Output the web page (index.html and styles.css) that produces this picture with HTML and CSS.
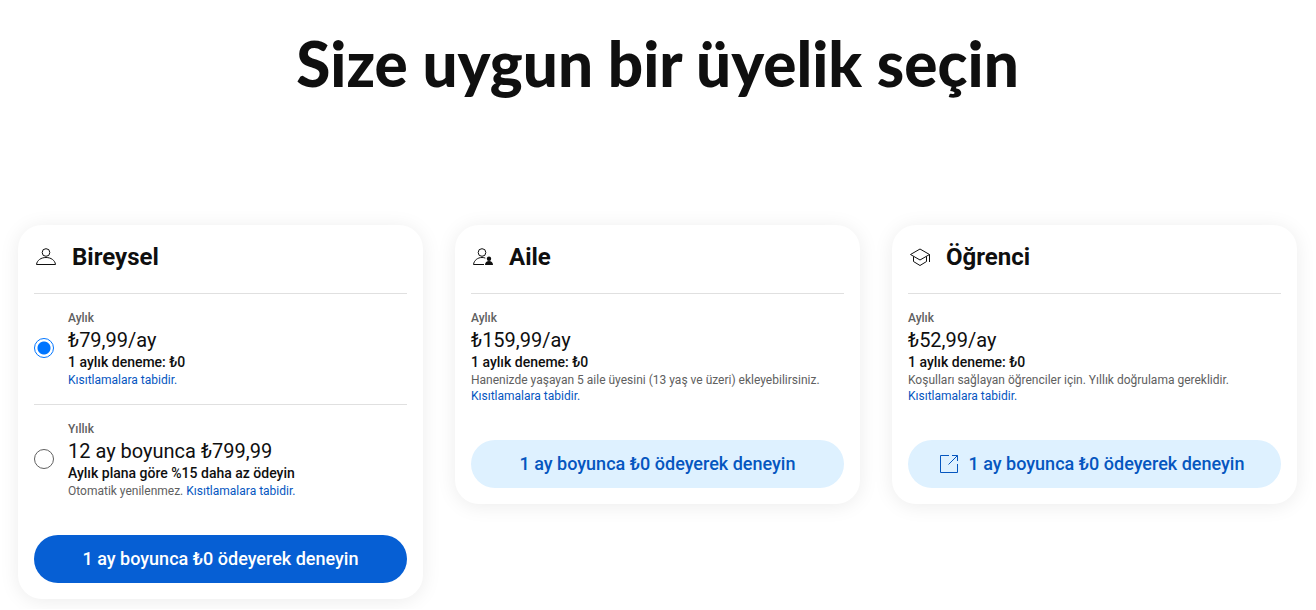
FILE: index.html
```html
<!DOCTYPE html>
<html lang="tr">
<head>
    <meta charset="utf-8">
    <meta name="viewport" content="width=device-width, initial-scale=1">
    <title>Size uygun bir üyelik seçin</title>
    <link rel="stylesheet" href="styles.css">
</head>
<body>
    <main class="plans">
        <h1 class="plans__title">Size uygun bir üyelik seçin</h1>

        <div class="plans__list">
            <section class="card">
                <header class="card__header">
                    <svg class="icon" viewBox="0 0 24 24" aria-hidden="true">
                        <circle cx="12" cy="7.5" r="3.8"/>
                        <path d="M2.500 19.500C3 15.300 7 12.500 12 12.500s9 2.800 9.500 7z"/>
                    </svg>
                    <h2 class="card__title">Bireysel</h2>
                </header>
                <div class="plan">
                    <input class="plan__radio" type="radio" name="plan" id="monthly" checked>
                    <div class="plan__text">
                        <label for="monthly">
                            <span class="plan__period">Aylık</span>
                            <span class="plan__price">₺79,99/ay</span>
                            <span class="plan__offer">1 aylık deneme: ₺0</span>
                        </label>
                        <p class="plan__note"><a href="#">Kısıtlamalara tabidir.</a></p>
                    </div>
                </div>
                <div class="plan">
                    <input class="plan__radio" type="radio" name="plan" id="yearly">
                    <div class="plan__text">
                        <label for="yearly">
                            <span class="plan__period">Yıllık</span>
                            <span class="plan__price">12 ay boyunca ₺799,99</span>
                            <span class="plan__offer">Aylık plana göre %15 daha az ödeyin</span>
                        </label>
                        <p class="plan__note">Otomatik yenilenmez. <a href="#">Kısıtlamalara tabidir.</a></p>
                    </div>
                </div>
                <button class="btn btn--primary" type="button">1 ay boyunca ₺0 ödeyerek deneyin</button>
            </section>

            <section class="card">
                <header class="card__header">
                    <svg class="icon" viewBox="0 0 24 24" aria-hidden="true">
                        <circle cx="11" cy="7.5" r="3.8"/>
                        <path d="M13 19.500H2.500C3 15.500 6.500 12.500 11 12.500c1.300 0 2.400.2 3.300.6"/>
                        <circle class="icon__fill" cx="18" cy="13.800" r="2.200"/>
                        <path class="icon__fill" d="M14 20c0-2.500 1.800-4 4-4s4 1.500 4 4z"/>
                    </svg>
                    <h2 class="card__title">Aile</h2>
                </header>
                <div class="plan">
                    <div class="plan__text">
                        <span class="plan__period">Aylık</span>
                        <span class="plan__price">₺159,99/ay</span>
                        <span class="plan__offer">1 aylık deneme: ₺0</span>
                        <p class="plan__note">Hanenizde yaşayan 5 aile üyesini (13 yaş ve üzeri) ekleyebilirsiniz. <a href="#">Kısıtlamalara tabidir.</a></p>
                    </div>
                </div>
                <button class="btn" type="button">1 ay boyunca ₺0 ödeyerek deneyin</button>
            </section>

            <section class="card">
                <header class="card__header">
                    <svg class="icon" viewBox="0 0 24 24" aria-hidden="true">
                        <path d="M2.500 9.500 12 4l9.500 5.500L12 15z"/>
                        <path d="M5.500 11.500v5L12 20.500l6.500-4v-5M21.500 9.500V17"/>
                    </svg>
                    <h2 class="card__title">Öğrenci</h2>
                </header>
                <div class="plan">
                    <div class="plan__text">
                        <span class="plan__period">Aylık</span>
                        <span class="plan__price">₺52,99/ay</span>
                        <span class="plan__offer">1 aylık deneme: ₺0</span>
                        <p class="plan__note">Koşulları sağlayan öğrenciler için. Yıllık doğrulama gereklidir. <a href="#">Kısıtlamalara tabidir.</a></p>
                    </div>
                </div>
                <button class="btn btn--icon" type="button">
                    <svg class="icon" viewBox="0 0 24 24" aria-hidden="true">
                        <path d="M12 3.500H3.500v17h17V12M15 3.500h5.500V9M20.500 3.500l-9 9"/>
                    </svg>
                    1 ay boyunca ₺0 ödeyerek deneyin
                </button>
            </section>
        </div>
    </main>
</body>
</html>
```
FILE: styles.css
```css
* {
    box-sizing: border-box;
}

body {
    background: #fff;
    color: #0f0f0f;
    font-family: Roboto, Arial, sans-serif;
    margin: 0;
}

a {
    color: #0556bf;
    text-decoration: none;
}

.plans {
    padding: 27px 19px 10px 18px;
}

.plans__title {
    font-family: Lato, sans-serif;
    font-size: 62px;
    font-weight: 900;
    line-height: 72px;
    margin: 0 0 126px;
    text-align: center;
}

.plans__list {
    align-items: start;
    display: grid;
    gap: 32px;
    grid-template-columns: repeat(3, 1fr);
}

.card {
    border-radius: 24px;
    box-shadow: 0 2px 20px rgba(0, 0, 0, 0.08);
    padding: 16px;
}

.card__header {
    align-items: center;
    display: flex;
    gap: 14px;
    padding-bottom: 20px;
}

.card__title {
    font-size: 24px;
    font-weight: 700;
    line-height: 32px;
    margin: 0;
}

.icon {
    fill: none;
    flex-shrink: 0;
    height: 24px;
    stroke: currentColor;
    width: 24px;
}

.icon__fill {
    fill: currentColor;
    stroke: none;
}

.plan {
    align-items: center;
    border-top: 1px solid #e0e0e0;
    display: flex;
    gap: 14px;
    padding: 16px 0;
}

.plan__radio {
    appearance: none;
    border: 1px solid #606060;
    border-radius: 50%;
    flex-shrink: 0;
    height: 20px;
    margin: 0 0 2px;
    width: 20px;
}

.plan__radio:checked {
    background: radial-gradient(circle, #0075ff 6px, #fff 7px);
    border-color: #0075ff;
}

.plan__period,
.plan__price,
.plan__offer {
    display: block;
}

.plan__period {
    color: #606060;
    font-size: 12px;
    font-weight: 500;
    line-height: 16px;
}

.plan__price {
    font-size: 20px;
    line-height: 28px;
}

.plan__offer {
    font-size: 14px;
    font-weight: 500;
    line-height: 16px;
    margin-bottom: 2px;
}

.plan__note {
    color: #606060;
    font-size: 12px;
    line-height: 16px;
    margin: 0;
}

.btn {
    align-items: center;
    background: #def1ff;
    border: none;
    border-radius: 24px;
    color: #0556bf;
    cursor: pointer;
    display: flex;
    font-family: inherit;
    font-size: 18px;
    font-weight: 500;
    gap: 8px;
    height: 48px;
    justify-content: center;
    line-height: 22px;
    margin-top: 20px;
    padding: 0 16px;
    width: 100%;
}

.btn--primary {
    background: #065fd4;
    color: #fff;
}

.btn--icon {
    padding-right: 24px;
}
```
